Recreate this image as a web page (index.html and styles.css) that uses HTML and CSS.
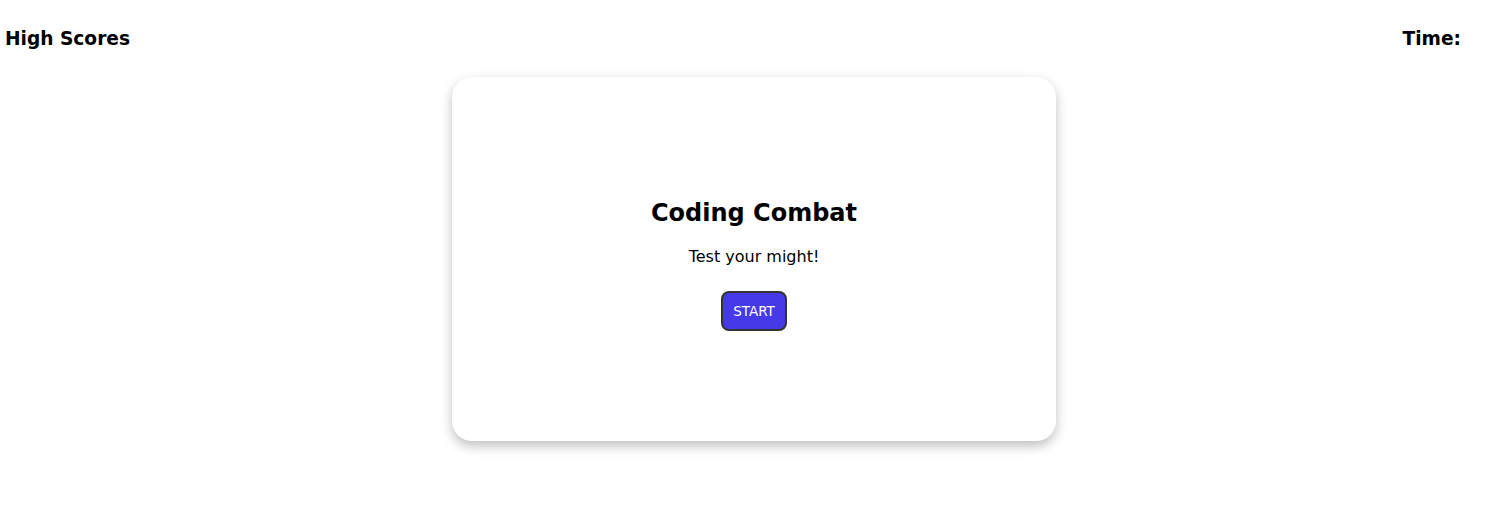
FILE: index.html
```html
<!DOCTYPE html>
<html>
<head>
<meta charset="utf-8">
<link rel="stylesheet" href="styles.css">
</head>
<body>
<header class="topbar">
  <a class="highscores">High Scores</a>
  <div class="timer">Time: <span class="time-value"></span></div>
</header>
<main class="stage">
  <section class="card">
    <h1 class="title">Coding Combat</h1>
    <p class="subtitle">Test your might!</p>
    <button class="start">START</button>
  </section>
</main>
</body>
</html>
```
FILE: styles.css
```css
* { box-sizing: border-box; }
html, body { margin: 0; padding: 0; background: #fff; }
body { font-family: "DejaVu Sans", Verdana, sans-serif; color: #000; min-height: 526px; }
.topbar {
  display: flex;
  justify-content: space-between;
  align-items: flex-start;
  padding: 28px 47px 0 5px;
  height: 77px;
}
.highscores, .timer {
  font-weight: bold;
  font-size: 18.6px;
  line-height: 22px;
}
.stage {
  display: flex;
  justify-content: center;
  padding-bottom: 40px;
}
.card {
  width: 604px;
  height: 364px;
  border-radius: 20px;
  background: #fff;
  box-shadow: 0 5px 12px rgba(0,0,0,0.25);
  display: flex;
  flex-direction: column;
  align-items: center;
  justify-content: center;
  padding-top: 10px;
}
.title {
  margin: 0;
  font-size: 24px;
  line-height: 30px;
  font-weight: bold;
}
.subtitle {
  margin: 19px 0 0;
  font-size: 16px;
  line-height: 20px;
}
.start {
  margin-top: 24px;
  width: 66px;
  height: 40px;
  background: #4539e8;
  color: #fff;
  border: 2px solid #333;
  border-radius: 8px;
  font-family: "DejaVu Sans", Verdana, sans-serif;
  font-size: 13.5px;
  padding: 0;
}
```
